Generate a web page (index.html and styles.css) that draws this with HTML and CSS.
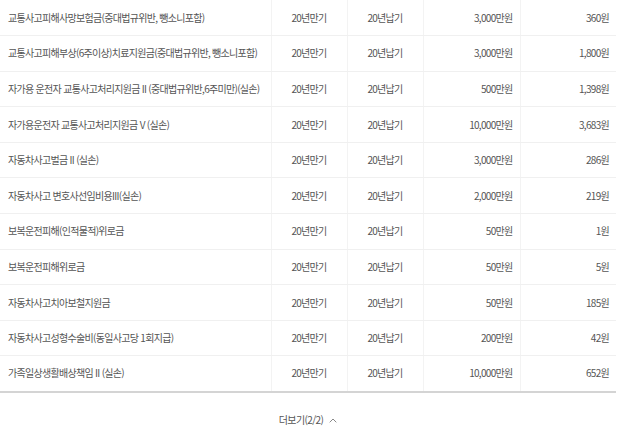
FILE: index.html
```html
<!DOCTYPE html>
<html lang="ko">
<head>
<meta charset="utf-8">
<link rel="stylesheet" href="styles.css">
</head>
<body>
<div class="wrap">
<table class="cov">
<colgroup><col class="c1"><col class="c2"><col class="c3"><col class="c4"><col class="c5"></colgroup>
<tbody>
<tr><td class="name">교통사고피해사망보험금(중대법규위반, 뺑소니포함)</td><td class="ctr">20년만기</td><td class="ctr">20년납기</td><td class="num">3,000만원</td><td class="num">360원</td></tr>
<tr><td class="name">교통사고피해부상(6주이상)치료지원금(중대법규위반, 뺑소니포함)</td><td class="ctr">20년만기</td><td class="ctr">20년납기</td><td class="num">3,000만원</td><td class="num">1,800원</td></tr>
<tr><td class="name">자가용 운전자 교통사고처리지원금 II (중대법규위반,6주미만)(실손)</td><td class="ctr">20년만기</td><td class="ctr">20년납기</td><td class="num">500만원</td><td class="num">1,398원</td></tr>
<tr><td class="name">자가용운전자 교통사고처리지원금 V (실손)</td><td class="ctr">20년만기</td><td class="ctr">20년납기</td><td class="num">10,000만원</td><td class="num">3,683원</td></tr>
<tr><td class="name">자동차사고벌금 II (실손)</td><td class="ctr">20년만기</td><td class="ctr">20년납기</td><td class="num">3,000만원</td><td class="num">286원</td></tr>
<tr><td class="name">자동차사고 변호사선임비용III(실손)</td><td class="ctr">20년만기</td><td class="ctr">20년납기</td><td class="num">2,000만원</td><td class="num">219원</td></tr>
<tr><td class="name">보복운전피해(인적물적)위로금</td><td class="ctr">20년만기</td><td class="ctr">20년납기</td><td class="num">50만원</td><td class="num">1원</td></tr>
<tr><td class="name">보복운전피해위로금</td><td class="ctr">20년만기</td><td class="ctr">20년납기</td><td class="num">50만원</td><td class="num">5원</td></tr>
<tr><td class="name">자동차사고치아보철지원금</td><td class="ctr">20년만기</td><td class="ctr">20년납기</td><td class="num">50만원</td><td class="num">185원</td></tr>
<tr><td class="name">자동차사고성형수술비(동일사고당 1회지급)</td><td class="ctr">20년만기</td><td class="ctr">20년납기</td><td class="num">200만원</td><td class="num">42원</td></tr>
<tr class="last"><td class="name">가족일상생활배상책임 II (실손)</td><td class="ctr">20년만기</td><td class="ctr">20년납기</td><td class="num">10,000만원</td><td class="num">652원</td></tr>
</tbody>
</table>
<div class="more">
<span class="more-label">더보기(2/2)</span>
<svg class="caret" width="8" height="5" viewBox="0 0 8 5"><path d="M0.7 4.3 L4 1 L7.3 4.3" fill="none" stroke="#888" stroke-width="1"/></svg>
</div>
</div>
</body>
</html>
```
FILE: styles.css
```css
html, body {
  margin: 0;
  padding: 0;
  background: #fff;
}
body {
  font-family: "Noto Sans CJK KR", "Noto Sans", sans-serif;
  color: #555;
}
.wrap {
  width: 616px;
}
.cov {
  width: 616px;
  border-collapse: collapse;
  table-layout: fixed;
  font-size: 10px;
  letter-spacing: -0.7px;
}
.c1 { width: 271px; }
.c2 { width: 76px; }
.c3 { width: 76px; }
.c4 { width: 97px; }
.c5 { width: 96px; }
.cov td {
  height: 35.6px;
  padding: 0 7px;
  box-sizing: border-box;
  border-bottom: 1px solid #f0f0f0;
  border-left: 1px solid #f3f3f3;
  white-space: nowrap;
  vertical-align: middle;
  line-height: 14px;
}
.cov td:first-child {
  border-left: none;
  padding-left: 8px;
}
.cov .ctr { text-align: center; }
.cov .num { text-align: right; }
.cov tr.last td {
  border-bottom: 2px solid #d4d4d4;
}
.more {
  display: flex;
  justify-content: center;
  align-items: center;
  gap: 6px;
  padding-top: 19px;
  font-size: 10px;
  letter-spacing: -0.6px;
  color: #555;
}
.caret {
  margin-top: 2px;
}
```
